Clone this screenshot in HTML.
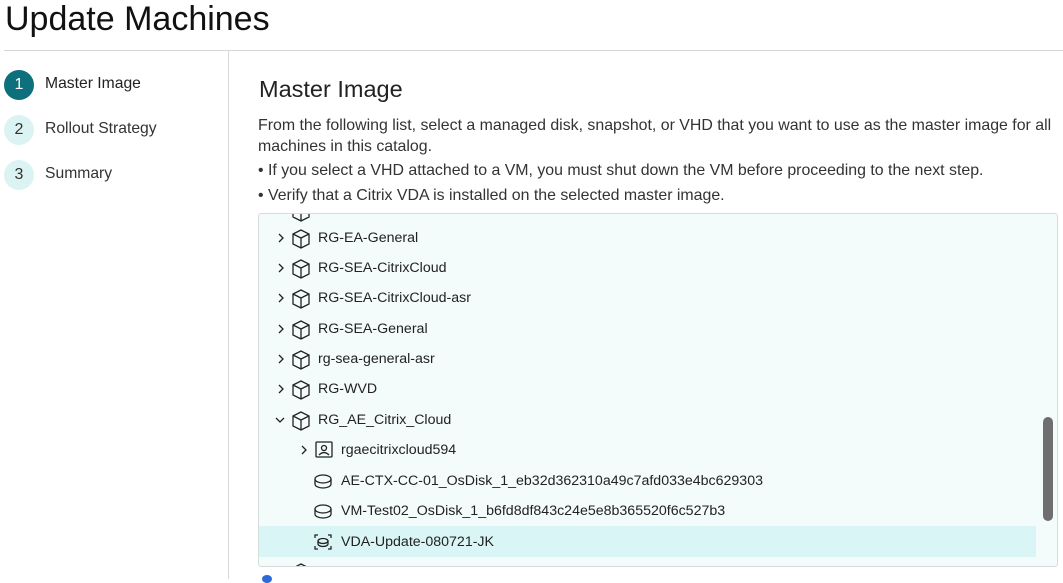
<!DOCTYPE html>
<html><head><meta charset="utf-8"><style>
*{margin:0;padding:0;box-sizing:border-box}
body{width:1063px;height:579px;overflow:hidden;background:#fff;font-family:"Liberation Sans",sans-serif;color:#222;position:relative}
.a{position:absolute;white-space:nowrap}
h1{position:absolute;left:5px;top:0px;font-size:34px;font-weight:400;color:#111}
.hr{position:absolute;left:4px;top:50px;width:1059px;height:1px;background:#d8d8d8}
.vr{position:absolute;left:228px;top:51px;width:1px;height:528px;background:#d8d8d8}
.step{position:absolute;left:4px;width:30px;height:30px;border-radius:50%;background:#dcf3f3;color:#333;font-size:16px;text-align:center;line-height:30px}
.sl{position:absolute;left:45px;font-size:15.7px;color:#333}
.box{position:absolute;left:258px;top:213px;width:800px;height:354px;background:#f3fbfb;border:1px solid #d4dcdc;border-radius:3px;overflow:hidden}
.row{position:absolute;font-size:14.2px;color:#222;white-space:nowrap}
.ic{position:absolute}
p{font-size:15.9px;color:#333}
</style></head><body>
<h1>Update Machines</h1>
<div class="hr"></div><div class="vr"></div>
<div class="step" style="top:70px;background:#0e6f7d;color:#fff">1</div>
<div class="sl" style="top:75px;color:#222">Master Image</div>
<div class="step" style="top:115px">2</div>
<div class="sl" style="top:120px">Rollout Strategy</div>
<div class="step" style="top:160px">3</div>
<div class="sl" style="top:165px">Summary</div>

<div class="a" style="left:259px;top:76px;font-size:23.5px;color:#222">Master Image</div>
<p class="a" style="left:258px;top:117px">From the following list, select a managed disk, snapshot, or VHD that you want to use as the master image for all</p>
<p class="a" style="left:258px;top:138px">machines in this catalog.</p>
<p class="a" style="left:258px;top:162px">• If you select a VHD attached to a VM, you must shut down the VM before proceeding to the next step.</p>
<p class="a" style="left:258px;top:187px">• Verify that a Citrix VDA is installed on the selected master image.</p>

<div class="box">
<div style="position:absolute;left:0;top:312px;width:777px;height:31px;background:#d9f5f5"></div>
<div style="position:absolute;left:784px;top:203px;width:10px;height:104px;border-radius:5px;background:#6e6e6e"></div>
<svg class="ic" width="800" height="354" style="left:0;top:0" fill="none" stroke="#222" stroke-width="1.3">
<defs>
<g id="cube"><path d="M0 -4 L8 -8 L16 -4 L16 6 L8 10 L0 6 Z M0 -4 L8 0 L16 -4 M8 0 V10"/></g>
<g id="chr"><path d="M0 -4 L4 0 L0 4"/></g>
<g id="disk"><ellipse cx="8" cy="-2" rx="8" ry="4"/><path d="M0 -2 V3 A8 4 0 0 0 16 3 V-2"/></g>
</defs>
<use href="#cube" x="34" y="-3"/>
<use href="#chr" x="20" y="24"/><use href="#cube" x="34" y="24"/>
<use href="#chr" x="20" y="54"/><use href="#cube" x="34" y="54"/>
<use href="#chr" x="20" y="84"/><use href="#cube" x="34" y="84"/>
<use href="#chr" x="20" y="115"/><use href="#cube" x="34" y="115"/>
<use href="#chr" x="20" y="145"/><use href="#cube" x="34" y="145"/>
<use href="#chr" x="20" y="175"/><use href="#cube" x="34" y="175"/>
<path d="M17 204 L21 208 L25 204"/><use href="#cube" x="34" y="206"/>
<use href="#chr" x="43" y="236"/>
<rect x="57" y="228" width="16" height="15" rx="1"/><circle cx="65" cy="234" r="2.5"/><path d="M60 241 Q65 236 70 241"/>
<use href="#disk" x="56" y="267"/>
<use href="#disk" x="56" y="297"/>
<g transform="translate(56 328)"><path d="M0 -4 V-7 H3 M13 -7 H16 V-4 M0 4 V7 H3 M13 7 H16 V4"/><ellipse cx="8" cy="-1" rx="5" ry="2.5"/><path d="M3 -1 V2 A5 2.5 0 0 0 13 2 V-1"/></g>
<use href="#cube" x="34" y="358"/>
</svg>
<div class="row" style="left:59px;top:16px">RG-EA-General</div>
<div class="row" style="left:59px;top:46px">RG-SEA-CitrixCloud</div>
<div class="row" style="left:59px;top:76px">RG-SEA-CitrixCloud-asr</div>
<div class="row" style="left:59px;top:107px">RG-SEA-General</div>
<div class="row" style="left:59px;top:137px">rg-sea-general-asr</div>
<div class="row" style="left:59px;top:167px">RG-WVD</div>
<div class="row" style="left:59px;top:198px">RG_AE_Citrix_Cloud</div>
<div class="row" style="left:82px;top:228px">rgaecitrixcloud594</div>
<div class="row" style="left:82px;top:259px">AE-CTX-CC-01_OsDisk_1_eb32d362310a49c7afd033e4bc629303</div>
<div class="row" style="left:82px;top:289px">VM-Test02_OsDisk_1_b6fd8df843c24e5e8b365520f6c527b3</div>
<div class="row" style="left:82px;top:320px">VDA-Update-080721-JK</div>
</div>
<div style="position:absolute;left:262px;top:575px;width:10px;height:8px;border-radius:50%;background:#2a6bd8"></div>
</body></html>
